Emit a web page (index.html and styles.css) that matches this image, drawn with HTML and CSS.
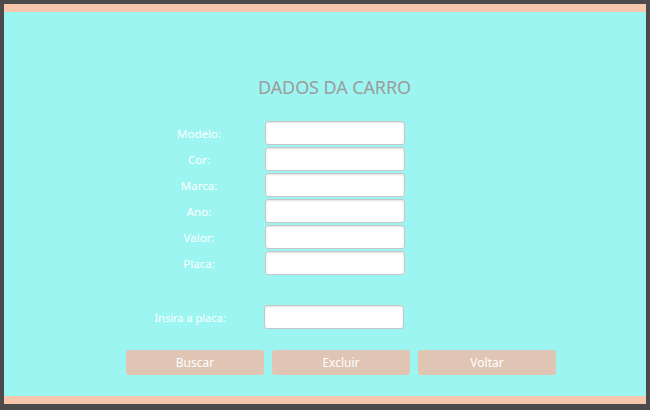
FILE: index.html
```html
<!DOCTYPE html>
<html lang="pt">
<head>
<meta charset="utf-8">
<title>Dados da Carro</title>
<link rel="stylesheet" href="styles.css">
</head>
<body>
<div class="frame">
  <div class="window">
    <h1 class="title">DADOS DA CARRO</h1>
    <div class="form">
      <label class="label">Modelo:</label><input class="field" type="text">
      <label class="label">Cor:</label><input class="field" type="text">
      <label class="label">Marca:</label><input class="field" type="text">
      <label class="label">Ano:</label><input class="field" type="text">
      <label class="label">Valor:</label><input class="field" type="text">
      <label class="label">Placa:</label><input class="field" type="text">
    </div>
    <div class="search">
      <label class="label search-label">Insira a placa:</label><input class="field" type="text">
    </div>
    <div class="actions">
      <button class="btn">Buscar</button>
      <button class="btn">Excluir</button>
      <button class="btn">Voltar</button>
    </div>
  </div>
</div>
</body>
</html>
```

FILE: styles.css
```css
html, body {
  margin: 0;
  padding: 0;
}
body {
  font-family: "Noto Sans", "Open Sans", sans-serif;
  background: #4b4b4b;
}
.frame {
  width: 650px;
  height: 410px;
  box-sizing: border-box;
  padding: 4px 4px 6px 4px;
  background: #4b4b4b;
}
.window {
  height: 100%;
  box-sizing: border-box;
  background: #9cf5f1;
  border-top: 8px solid #f7c8ad;
  border-bottom: 8px solid #f7c8ad;
  display: flex;
  flex-direction: column;
}
.title {
  margin: 63px 0 0 0;
  padding-left: 19px;
  height: 24px;
  line-height: 24px;
  text-align: center;
  font-size: 18px;
  font-weight: 400;
  color: #9c9c9c;
  letter-spacing: -0.1px;
}
.form {
  margin: 22px 0 0 150px;
  display: grid;
  grid-template-columns: 90px 140px;
  column-gap: 21px;
  row-gap: 2px;
  align-items: center;
}
.label {
  color: #ffffff;
  font-size: 11.5px;
  text-align: center;
}
.field {
  width: 140px;
  height: 24px;
  box-sizing: border-box;
  margin: 0;
  border: 1px solid #c6c6c6;
  border-radius: 3px;
  background: #ffffff;
  box-shadow: inset 0 1px 2px rgba(0, 0, 0, 0.12);
  outline: none;
}
.search {
  margin: 30px 0 0 141px;
  display: flex;
  align-items: center;
  gap: 29px;
}
.search-label {
  width: 90px;
  font-size: 11px;
}
.actions {
  margin: 21px 0 0 122px;
  display: flex;
  gap: 8px;
}
.btn {
  width: 138px;
  height: 25px;
  margin: 0;
  border: none;
  border-radius: 3px;
  background: #e0c5b4;
  color: #ffffff;
  font-family: "Noto Sans", "Open Sans", sans-serif;
  font-size: 12px;
  padding: 0;
}
```
